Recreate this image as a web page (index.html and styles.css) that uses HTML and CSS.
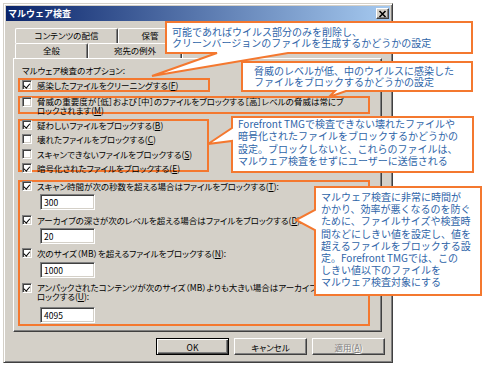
FILE: index.html
```html
<!DOCTYPE html>
<html lang="ja">
<head>
<meta charset="utf-8">
<title>マルウェア検査</title>
<link rel="stylesheet" href="styles.css">
</head>
<body>
<div class="window">
  <div class="titlebar">
    <span class="title">マルウェア検査</span>
    <span class="close"><svg width="9" height="8" viewBox="0 0 9 8"><path d="M1.5 1 L7.5 7 M7.5 1 L1.5 7" stroke="#000" stroke-width="1.6" fill="none"/></svg></span>
  </div>
  <div class="tabs">
    <div class="tabrow">
      <div class="tab w-content">コンテンツの配信</div>
      <div class="tab w-keep">保管</div>
      <div class="tab w-rest"></div>
    </div>
    <div class="tabrow">
      <div class="tab w-general">全般</div>
      <div class="tab w-dest">宛先の例外</div>
      <div class="tab sel w-opt"></div>
    </div>
  </div>
  <div class="panel">
    <div class="opt-title">マルウェア検査のオプション:</div>
    <div class="obox box-a">
      <div class="row"><span class="cb on"></span><span>感染したファイルをクリーニングする(<u>F</u>)</span></div>
    </div>
    <div class="obox box-b">
      <div class="row two"><span class="cb"></span><span>脅威の重要度が［低］および［中］のファイルをブロックする［高］レベルの脅威は常にブ<br>ロックされます(<u>M</u>)</span></div>
    </div>
    <div class="obox box-c">
      <div class="row r14 first"><span class="cb on"></span><span>疑わしいファイルをブロックする(<u>B</u>)</span></div>
      <div class="row r14"><span class="cb"></span><span>壊れたファイルをブロックする(<u>C</u>)</span></div>
      <div class="row r14"><span class="cb"></span><span>スキャンできないファイルをブロックする(<u>S</u>)</span></div>
      <div class="row r14"><span class="cb on"></span><span>暗号化されたファイルをブロックする(<u>E</u>)</span></div>
    </div>
    <div class="obox box-d">
      <div class="row d1"><span class="cb on"></span><span>スキャン時間が次の秒数を超える場合はファイルをブロックする(<u>T</u>):</span></div>
      <div class="field f1">300</div>
      <div class="row d2"><span class="cb on"></span><span>アーカイブの深さが次のレベルを超える場合はファイルをブロックする(<u>D</u>):</span></div>
      <div class="field f2">20</div>
      <div class="row d3"><span class="cb on"></span><span>次のサイズ（MB）を超えるファイルをブロックする(<u>N</u>):</span></div>
      <div class="field f3">1000</div>
      <div class="row two d4"><span class="cb on"></span><span>アンパックされたコンテンツが次のサイズ（MB）よりも大きい場合はアーカイブをブ<br>ロックする(<u>U</u>):</span></div>
      <div class="field f4">4095</div>
    </div>
  </div>
  <div class="buttons">
    <div class="btn default">OK</div>
    <div class="btn">キャンセル</div>
    <div class="btn disabled">適用(<u>A</u>)</div>
  </div>
</div>

<svg class="shapes" width="490" height="369" viewBox="0 0 490 369">
  <path d="M166 22 H472 V53 H288 L152 76 L217 53 H166 Z"/>
  <path d="M242 62 H472 V91 H346 L329 97 L335 91 H242 Z"/>
  <path d="M232 117 H473 V172 H232 V141 L208 144 L232 128 Z"/>
  <path d="M315 187 H481 V295 H315 V230 L296 220 L315 210 Z"/>
</svg>

<div class="ctext c1">可能であればウイルス部分のみを削除し、<br>クリーンバージョンのファイルを生成するかどうかの設定</div>
<div class="ctext c2">脅威のレベルが低、中のウイルスに感染した<br>ファイルをブロックするかどうかの設定</div>
<div class="ctext c3">Forefront TMGで検査できない壊れたファイルや<br>暗号化されたファイルをブロックするかどうかの<br>設定。ブロックしないと、これらのファイルは、<br>マルウェア検査をせずにユーザーに送信される</div>
<div class="ctext c4">マルウェア検査に非常に時間が<br>かかり、効率が悪くなるのを防ぐ<br>ために、ファイルサイズや検査時<br>間などにしきい値を設定し、値を<br>超えるファイルをブロックする設<br>定。Forefront TMGでは、この<br>しきい値以下のファイルを<br>マルウェア検査対象にする</div>
</body>
</html>
```
FILE: styles.css
```css
* { box-sizing: border-box; }
html, body { margin: 0; }
body {
  position: relative;
  width: 490px;
  height: 369px;
  overflow: hidden;
  background: #fff;
  padding: 3px 0 0 3px;
  font-family: "Noto Sans CJK JP", sans-serif;
  color: #000;
}

.window {
  width: 390px;
  background: #d4d0c8;
  border: 1px solid;
  border-color: #d4d0c8 #404040 #404040 #d4d0c8;
  box-shadow: inset 1px 1px #fff, inset -1px -1px #808080;
  padding: 2px;
  display: flex;
  flex-direction: column;
}

.titlebar {
  height: 15px;
  background: linear-gradient(to right, #0a246a, #a6caf0);
  display: flex;
  align-items: center;
  justify-content: space-between;
  padding: 0 1px 0 2px;
}
.title {
  color: #fff;
  font-weight: bold;
  font-size: 9px;
  line-height: 15px;
}
.close {
  width: 13px;
  height: 11px;
  background: #d4d0c8;
  border: 1px solid;
  border-color: #fff #404040 #404040 #fff;
  box-shadow: inset -1px -1px #808080;
  display: flex;
  align-items: center;
  justify-content: center;
}
.close svg { display: block; }

.tabs {
  margin-top: 7px;
  padding-left: 9px;
  display: flex;
  flex-direction: column;
}
.tabrow {
  display: flex;
  height: 15px;
}
.tab {
  height: 15px;
  border-top: 1px solid #fff;
  border-left: 1px solid #fff;
  border-right: 1px solid #404040;
  box-shadow: inset -1px 0 #808080;
  border-radius: 2px 2px 0 0;
  font-size: 8.5px;
  font-feature-settings: "palt";
  line-height: 13px;
  text-align: center;
  white-space: nowrap;
}
.w-content { width: 103px; }
.w-keep { width: 64px; }
.w-rest { width: 80px; }
.w-general { width: 73px; }
.w-dest { width: 94px; }
.w-opt { width: 80px; }
.tab.sel {
  height: 17px;
  margin-top: -2px;
  margin-bottom: -1px;
  position: relative;
  z-index: 1;
  background: #d4d0c8;
}

.panel {
  margin: 0 8px 0 7px;
  height: 274px;
  border: 1px solid;
  border-color: #fff #404040 #404040 #fff;
  box-shadow: inset -1px -1px #808080;
  padding-left: 4px;
  font-size: 8.5px;
  font-feature-settings: "palt";
}
.opt-title {
  margin: 5px 0 0 4px;
  line-height: 12px;
  white-space: nowrap;
}

.obox {
  border: 2px solid #f4782f;
}
.box-a { width: 192px; margin-top: 2px; }
.box-b { width: 352px; height: 18px; margin-top: 4px; }
.box-c { width: 191px; height: 53px; margin-top: 5px; }
.box-d { width: 352px; height: 146px; margin-top: 8px; }

.row {
  display: flex;
  align-items: center;
  gap: 5px;
  padding-left: 2px;
  line-height: 10px;
  white-space: nowrap;
}
.row.two {
  align-items: flex-start;
  line-height: 9px;
}
.box-b .row { margin-top: -1px; }
.row.r14 { height: 14.3px; }
.row.r14.first { margin-top: -3px; }
.d1 { margin-top: -1px; }
.d2 { margin-top: 5px; }
.d3 { margin-top: 4px; }
.d4 { margin-top: 5px; }

.cb {
  flex: none;
  width: 10px;
  height: 10px;
  background: #fff;
  border: 1px solid;
  border-color: #808080 #fff #fff #808080;
  box-shadow: inset 1px 1px #404040, inset -1px -1px #d4d0c8;
  position: relative;
}
.cb.on::after {
  content: "";
  position: absolute;
  left: 2px;
  top: 0.5px;
  width: 2.5px;
  height: 4.5px;
  border: solid #000;
  border-width: 0 1.6px 1.6px 0;
  transform: rotate(40deg);
  transform-origin: center;
}

.field {
  width: 55px;
  height: 16px;
  margin-left: 20px;
  background: #fff;
  border: 1px solid;
  border-color: #808080 #fff #fff #808080;
  box-shadow: inset 1px 1px #404040, inset -1px -1px #d4d0c8;
  padding-left: 3px;
  font-size: 8.5px;
  line-height: 14px;
}
.f1 { margin-top: 3px; }
.f2 { margin-top: 3px; }
.f3 { margin-top: 4px; }
.f4 { margin-top: 6px; }

.buttons {
  display: flex;
  justify-content: flex-end;
  gap: 5px;
  margin: 6px 0 5px;
  padding-right: 5px;
}
.btn {
  width: 73px;
  height: 17px;
  background: #d4d0c8;
  border: 1px solid;
  border-color: #fff #404040 #404040 #fff;
  box-shadow: inset -1px -1px #808080;
  display: flex;
  align-items: center;
  justify-content: center;
  font-size: 8.5px;
  font-feature-settings: "palt";
}
.btn.default {
  border-color: #000;
  box-shadow: inset 1px 1px #fff, inset -1px -1px #404040, inset -2px -2px #808080;
}
.btn.disabled {
  color: #808080;
  text-shadow: 1px 1px #fff;
}

.shapes {
  position: absolute;
  left: 0;
  top: 0;
  z-index: 5;
}
.shapes path {
  fill: #fff;
  stroke: #f4782f;
  stroke-width: 2;
  stroke-linejoin: miter;
}

.ctext {
  position: absolute;
  z-index: 6;
  color: #2e64a8;
  font-size: 10px;
  white-space: nowrap;
}
.c1 { left: 172px; top: 26px; line-height: 11px; }
.c2 { left: 254px; top: 64.5px; line-height: 11px; }
.c3 { left: 238px; top: 118px; line-height: 12.3px; }
.c4 { left: 321px; top: 191px; line-height: 12.2px; }
```
